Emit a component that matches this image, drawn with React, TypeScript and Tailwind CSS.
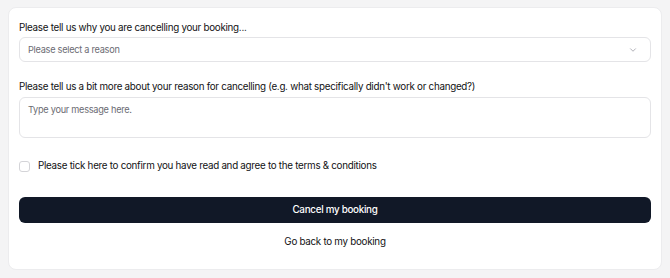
export default function App() {
  return (
    <div
      className="min-h-screen bg-[#f4f4f5] p-2 pt-[7px] tracking-[-0.017em]"
      style={{ fontFamily: "Inter, 'Noto Sans', sans-serif" }}
    >
      <div className="h-[263px] rounded-lg border border-[#ececee] bg-white px-[10px] pt-[12px]">
        <label className="block text-[9.8px] leading-4 text-[#111113]">
          Please tell us why you are cancelling your booking...
        </label>
        <div className="mt-px flex h-[25px] items-center justify-between rounded-md border border-[#e4e4e7] px-2">
          <span className="text-[9.2px] text-[#6b6b73]">Please select a reason</span>
          <svg width="10" height="10" viewBox="0 0 24 24" fill="none" stroke="#a1a1aa" strokeWidth="2" strokeLinecap="round" strokeLinejoin="round" className="mr-1">
            <path d="m6 9 6 6 6-6" />
          </svg>
        </div>

        <label className="mt-[17px] block text-[9.8px] leading-4 text-[#111113]">
          Please tell us a bit more about your reason for cancelling (e.g. what specifically didn't work or changed?)
        </label>
        <div className="mt-[2px] h-[41px] rounded-md border border-[#e4e4e7] px-2 pt-[5px] text-[9.2px] text-[#6b6b73]">
          Type your message here.
        </div>

        <div className="mt-[20px] flex items-center gap-2">
          <span className="h-[11px] w-[11px] rounded-[3px] border border-[#d4d4d8]" />
          <span className="text-[9.8px] leading-4 text-[#111113]">
            Please tick here to confirm you have read and agree to the terms &amp; conditions
          </span>
        </div>

        <button className="mt-[23px] flex h-[26px] w-full items-center justify-center rounded-md bg-[#111827] text-[9.8px] font-medium text-white">
          Cancel my booking
        </button>

        <div className="mt-[11px] text-center text-[9.8px] leading-4 text-[#111113]">
          Go back to my booking
        </div>
      </div>
    </div>
  );
}
